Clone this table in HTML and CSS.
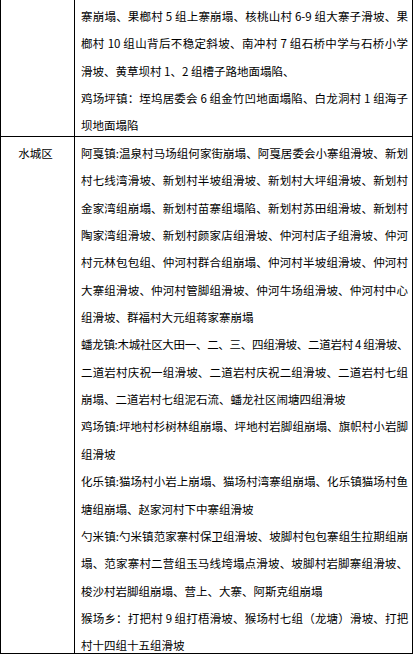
FILE: index.html
```html
<!DOCTYPE html>
<html lang="zh-CN">
<head>
<meta charset="utf-8">
<title>灾害点</title>
<link rel="stylesheet" href="styles.css">
</head>
<body>
<div class="sheet">
  <div class="row row-top">
    <div class="place"></div>
    <div class="desc">
      <p class="para">
        <span class="ln">寨崩塌、果榔村 5 组上寨崩塌、核桃山村 6-9 组大寨子滑坡、果</span>
        <span class="ln">榔村 10 组山背后不稳定斜坡、南冲村 7 组石桥中学与石桥小学</span>
        <span class="ln">滑坡、黄草坝村 1、2 组槽子路地面塌陷、</span>
      </p>
      <p class="para">
        <span class="ln">鸡场坪镇：垤坞居委会 6 组金竹凹地面塌陷、白龙洞村 1 组海子</span>
        <span class="ln">坝地面塌陷</span>
      </p>
    </div>
  </div>
  <div class="row row-main">
    <div class="place">水城区</div>
    <div class="desc">
      <p class="para">
        <span class="ln">阿戛镇:温泉村马场组何家街崩塌、阿戛居委会小寨组滑坡、新划</span>
        <span class="ln">村七线湾滑坡、新划村半坡组滑坡、新划村大坪组滑坡、新划村</span>
        <span class="ln">金家湾组崩塌、新划村苗寨组塌陷、新划村苏田组滑坡、新划村</span>
        <span class="ln">陶家湾组滑坡、新划村颜家店组滑坡、仲河村店子组滑坡、仲河</span>
        <span class="ln">村元林包包组、仲河村群合组崩塌、仲河村半坡组滑坡、仲河村</span>
        <span class="ln">大寨组滑坡、仲河村管脚组滑坡、仲河牛场组滑坡、仲河村中心</span>
        <span class="ln">组滑坡、群福村大元组蒋家寨崩塌</span>
      </p>
      <p class="para">
        <span class="ln tight">蟠龙镇:木城社区大田一、二、三、四组滑坡、二道岩村 4 组滑坡、</span>
        <span class="ln">二道岩村庆祝一组滑坡、二道岩村庆祝二组滑坡、二道岩村七组</span>
        <span class="ln">崩塌、二道岩村七组泥石流、蟠龙社区闹塘四组滑坡</span>
      </p>
      <p class="para">
        <span class="ln">鸡场镇:坪地村杉树林组崩塌、坪地村岩脚组崩塌、旗帜村小岩脚</span>
        <span class="ln">组滑坡</span>
      </p>
      <p class="para">
        <span class="ln">化乐镇:猫场村小岩上崩塌、猫场村湾寨组崩塌、化乐镇猫场村鱼</span>
        <span class="ln">塘组崩塌、赵家河村下中寨组滑坡</span>
      </p>
      <p class="para">
        <span class="ln">勺米镇:勺米镇范家寨村保卫组滑坡、坡脚村包包寨组生拉期组崩</span>
        <span class="ln">塌、范家寨村二营组玉马线垮塌点滑坡、坡脚村岩脚寨组滑坡、</span>
        <span class="ln">梭沙村岩脚组崩塌、营上、大寨、阿斯克组崩塌</span>
      </p>
      <p class="para">
        <span class="ln tight-sm">猴场乡：打把村 9 组打梧滑坡、猴场村七组（龙塘）滑坡、打把</span>
        <span class="ln">村十四组十五组滑坡</span>
      </p>
    </div>
  </div>
</div>
</body>
</html>
```
FILE: styles.css
```css
html, body {
  margin: 0;
  padding: 0;
  background: #ffffff;
}

body {
  font-family: "Noto Sans CJK SC", "Noto Sans", sans-serif;
  font-size: 11.5px;
  color: #000000;
}

.sheet {
  width: 411px;
  border-left: 1px solid #000;
  border-right: 1px solid #000;
  border-bottom: 1px solid #000;
}

.row {
  display: grid;
  grid-template-columns: 73px 1fr;
}

.row + .row {
  border-top: 1px solid #000;
}

.place {
  padding: 3px 4px 0 0;
  line-height: 27.35px;
  text-align: center;
}

.desc {
  border-left: 1px solid #000;
  padding: 3px 4px 0 6px;
}

.para {
  margin: 0;
  line-height: 27.35px;
}

.row-top .desc .para:last-child {
  margin-bottom: -3.7px;
}

.row-main .desc .para:last-child {
  margin-bottom: -7px;
}

.ln {
  display: block;
  white-space: nowrap;
  text-align: justify;
  text-align-last: justify;
}

.ln:last-child {
  text-align-last: left;
}

.tight {
  letter-spacing: -0.45px;
}

.tight-sm {
  letter-spacing: -0.25px;
}
```
